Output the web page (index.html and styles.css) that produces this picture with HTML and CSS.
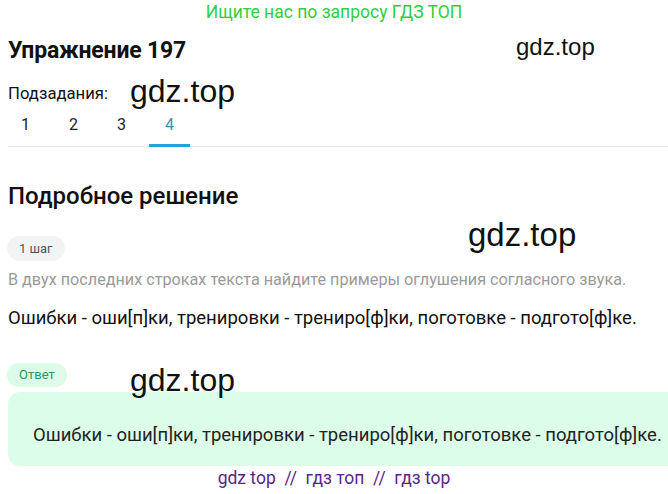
FILE: index.html
```html
<!DOCTYPE html>
<html lang="ru">
<head>
<meta charset="utf-8">
<link rel="stylesheet" href="styles.css">
</head>
<body>
<div class="banner">Ищите нас по запросу ГДЗ ТОП</div>
<main class="page">
  <h1 class="title">Упражнение 197</h1>
  <div class="sub">
    <span class="sub-label">Подзадания:</span>
  </div>
  <nav class="tabs">
    <span class="tab">1</span>
    <span class="tab">2</span>
    <span class="tab">3</span>
    <span class="tab active">4</span>
  </nav>
  <h2 class="section">Подробное решение</h2>
  <div class="pill step">1 шаг</div>
  <p class="hint">В двух последних строках текста найдите примеры оглушения согласного звука.</p>
  <p class="solution">Ошибки - оши[п]ки, тренировки - трениро[ф]ки, поготовке - подгото[ф]ке.</p>
  <div class="pill answer">Ответ</div>
  <div class="answer-box">Ошибки - оши[п]ки, тренировки - трениро[ф]ки, поготовке - подгото[ф]ке.</div>
  <div class="footer">gdz top &nbsp;//&nbsp; гдз топ &nbsp;//&nbsp; гдз top</div>
</main>
<span class="wm wm1">gdz.top</span>
<span class="wm wm2">gdz.top</span>
<span class="wm wm3">gdz.top</span>
<span class="wm wm4">gdz.top</span>
</body>
</html>
```
FILE: styles.css
```css
html, body {
  margin: 0;
  padding: 0;
  background: #fff;
  overflow: hidden;
}
body {
  font-family: Roboto, "Noto Sans", sans-serif;
  color: #111;
  width: 668px;
  height: 494px;
  position: relative;
}
.banner {
  text-align: center;
  color: #2fcf3a;
  font-size: 17.5px;
  line-height: 24px;
  height: 24px;
}
.page {
  padding-left: 8px;
}
.title {
  margin: 12px 0 0;
  font-size: 23px;
  font-weight: 700;
  line-height: 30px;
  letter-spacing: -0.2px;
}
.sub {
  margin-top: 16px;
  height: 22px;
  display: flex;
  align-items: center;
}
.sub-label {
  font-size: 16.7px;
}
.tabs {
  display: flex;
  gap: 7px;
  margin: 5px 0 0;
  border-bottom: 1px solid #e4e6e8;
  height: 37px;
}
.tab {
  width: 41px;
  text-align: center;
  font-size: 16px;
  line-height: 32px;
  color: #222;
  box-sizing: border-box;
}
.tab:first-child {
  margin-left: -3px;
}
.tab.active {
  color: #3a8fc4;
  border-bottom: 3px solid #23a6d5;
  height: 38px;
}
.section {
  margin: 34px 0 0;
  font-size: 24px;
  font-weight: 500;
  line-height: 30px;
}
.pill {
  display: block;
  width: fit-content;
  font-size: 13px;
  line-height: 25px;
  height: 25px;
  padding: 0 12px;
  border-radius: 13px;
  margin-left: -1px;
}
.step {
  margin-top: 25px;
  background: #f1f3f5;
  color: #555;
}
.hint {
  margin: 8px 0 0;
  font-size: 16.2px;
  line-height: 22px;
  color: #9a9a9a;
}
.solution {
  margin: 15px 0 0;
  font-size: 18.5px;
  line-height: 24px;
  color: #111;
}
.answer {
  margin-top: 33px;
  height: 24px;
  line-height: 24px;
  background: #dcfce7;
  color: #2f9a52;
}
.answer-box {
  margin-top: 5px;
  background: #dcfee9;
  border-radius: 12px 0 0 12px;
  height: 74px;
  box-sizing: border-box;
  padding: 31px 0 0 25px;
  font-size: 18.5px;
  line-height: 24px;
  color: #222;
  white-space: nowrap;
}
.footer {
  text-align: center;
  color: #5a2586;
  font-size: 17.5px;
  line-height: 24px;
  margin-top: 0;
  margin-left: -8px;
}
.wm {
  position: absolute;
  font-family: "Liberation Sans", Arial, sans-serif;
  color: #111;
  line-height: 1;
}
.wm1 { left: 516px; top: 35px; font-size: 24px; }
.wm2 { left: 130px; top: 75px; font-size: 32px; }
.wm3 { left: 468px; top: 218px; font-size: 33px; }
.wm4 { left: 130px; top: 364px; font-size: 32px; }
```
